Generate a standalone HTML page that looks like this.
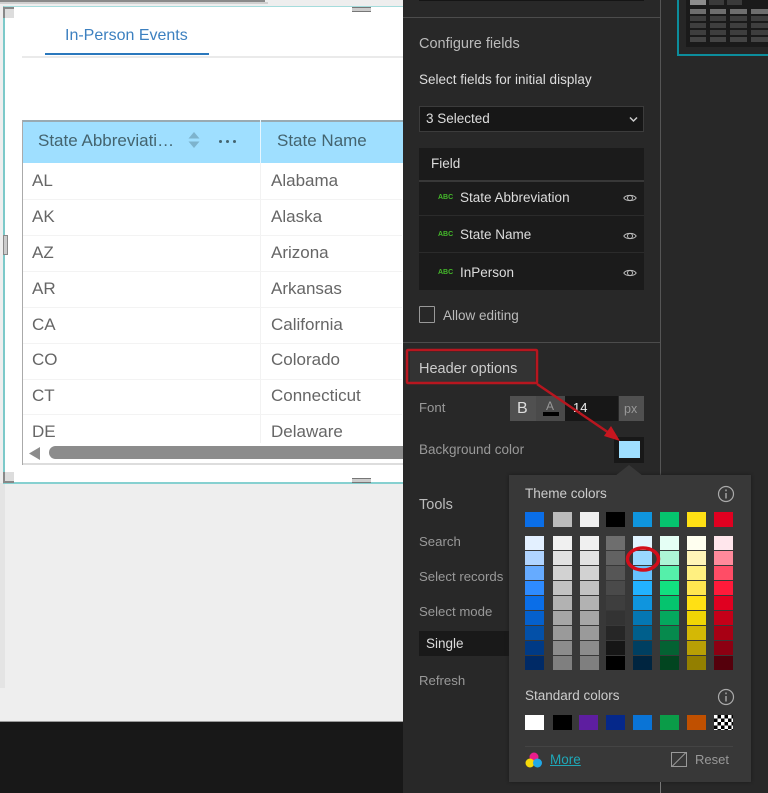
<!DOCTYPE html>
<html><head><meta charset="utf-8"><style>
*{box-sizing:border-box}
html,body{margin:0;padding:0}
body{width:768px;height:793px;position:relative;overflow:hidden;background:#eee;font-family:"Liberation Sans",sans-serif;filter:blur(.35px)}
.a,.t{position:absolute}
.t{white-space:nowrap;line-height:18px}
.c{font-size:17px;color:#666}
.rl{position:absolute;left:23px;width:379px;height:1px;background:#f3f3f3}
.p{font-size:13.200px;color:#999}
.h{font-size:14.500px;color:#bbb}
.w{color:#ddd;font-size:13.500px}
.abc{font-size:7px;font-weight:bold;color:#44b82a}
.col{position:absolute;top:536px;width:19px;display:flex;flex-direction:column;gap:1px}
.col i{display:block;height:14px}
.s{position:absolute;width:19px;height:15px}
.h1{position:absolute;width:19px;height:15px;top:715px}
.g{position:absolute;width:16px;height:5px;top:9px;background:#6e6e6e;box-shadow:0 7px #3e3e3e,0 14px #3e3e3e,0 21px #3e3e3e,0 28px #444}
</style></head><body>
<div class="a" style="left:0;top:0;width:265px;height:2px;background:#8a8a8a"></div>
<div class="a" style="left:0;top:2px;width:268px;height:2px;background:#d0d0d0"></div>
<div class="a" style="left:0;top:483px;width:5px;height:205px;background:#e4e4e4"></div>
<div class="a" style="left:0;top:721px;width:403px;height:1px;background:#999"></div>
<div class="a" style="left:0;top:722px;width:403px;height:71px;background:#181818"></div>

<div class="a" style="left:3px;top:6px;width:400px;height:478px;background:#fff;border-left:2px solid #7cc9c9;border-top:1px solid #a5dcdc;border-bottom:2px solid #86d0d0"></div>
<div class="a" style="left:3px;top:7px;width:11px;height:11px;background:#ddd;border-left:2px solid #888;border-top:2px solid #888"></div>
<div class="a" style="left:352px;top:7px;width:19px;height:5px;background:#ccc;border-bottom:1px solid #777;border-top:1px solid #777"></div>
<div class="a" style="left:3px;top:235px;width:5px;height:20px;background:#ccc;border:1px solid #888"></div>
<div class="a" style="left:3px;top:472px;width:11px;height:11px;background:#ddd;border-left:2px solid #888;border-bottom:2px solid #888"></div>
<div class="a" style="left:352px;top:478px;width:19px;height:5px;background:#ccc;border-top:1px solid #777;border-bottom:1px solid #777"></div>

<div class="t" style="left:65px;top:27px;font-size:16px;color:#3c80c0">In-Person Events</div>
<div class="a" style="left:22px;top:56px;width:381px;height:2px;background:#eaeaea"></div>
<div class="a" style="left:45px;top:53px;width:164px;height:2px;background:#2a78bd"></div>

<div class="a" style="left:22px;top:120px;width:381px;height:2px;background:#99aab2"></div>
<div class="a" style="left:22px;top:120px;width:1px;height:345px;background:#aaa"></div>
<div class="a" style="left:23px;top:122px;width:380px;height:41px;background:#9fdfff"></div>
<div class="a" style="left:260px;top:120px;width:1px;height:43px;background:#e6f6ff"></div>
<div class="a" style="left:260px;top:163px;width:1px;height:280px;background:#f2f2f2"></div>
<div class="t" style="left:38px;top:132px;font-size:17px;color:#44646f">State Abbreviati…</div>
<svg class="a" style="left:187px;top:131px" width="14" height="18"><path d="M7 1L12.500 7.500H1.500Z M1.500 10.500H12.500L7 17Z" fill="#7db3cd"/></svg>
<div class="a" style="left:219px;top:140px;width:3px;height:3px;border-radius:50%;background:#44646f;box-shadow:7px 0 #44646f,14px 0 #44646f"></div>
<div class="t" style="left:277px;top:132px;font-size:17px;color:#44646f">State Name</div>

<div class="rl" style="top:199px"></div><div class="rl" style="top:235px"></div><div class="rl" style="top:271px"></div><div class="rl" style="top:307px"></div><div class="rl" style="top:343px"></div><div class="rl" style="top:379px"></div><div class="rl" style="top:414px"></div>
<div class="t c" style="left:32px;top:172px">AL</div><div class="t c" style="left:271px;top:172px">Alabama</div>
<div class="t c" style="left:32px;top:208px">AK</div><div class="t c" style="left:271px;top:208px">Alaska</div>
<div class="t c" style="left:32px;top:244px">AZ</div><div class="t c" style="left:271px;top:244px">Arizona</div>
<div class="t c" style="left:32px;top:280px">AR</div><div class="t c" style="left:271px;top:280px">Arkansas</div>
<div class="t c" style="left:32px;top:316px">CA</div><div class="t c" style="left:271px;top:316px">California</div>
<div class="t c" style="left:32px;top:351px">CO</div><div class="t c" style="left:271px;top:351px">Colorado</div>
<div class="t c" style="left:32px;top:387px">CT</div><div class="t c" style="left:271px;top:387px">Connecticut</div>
<div class="t c" style="left:32px;top:423px">DE</div><div class="t c" style="left:271px;top:423px">Delaware</div>
<div class="a" style="left:23px;top:443px;width:380px;height:22px;background:#fff;border-bottom:2px solid #ddd"></div>
<svg class="a" style="left:28px;top:445px" width="13" height="17"><path d="M1 8.500L12 2V15Z" fill="#8c8c8c"/></svg>
<div class="a" style="left:49px;top:446px;width:354px;height:13px;background:#8c8c8c;border-radius:7px 0 0 7px"></div>

<div class="a" style="left:403px;top:0;width:365px;height:793px;background:#282828"></div>
<div class="a" style="left:660px;top:0;width:1px;height:793px;background:#555"></div>
<div class="a" style="left:403px;top:17px;width:257px;height:1px;background:#4c4c4c"></div>
<div class="a" style="left:419px;top:0;width:225px;height:1px;background:#151515"></div>

<div class="a" style="left:677px;top:0;width:91px;height:56px;border:2px solid #0c8d9c;border-top:0;border-right:0;background:#262626"></div>
<div class="a" style="left:686px;top:0;width:82px;height:47px;background:#1a1a1a"></div>
<div class="a" style="left:690px;top:0;width:16px;height:5px;background:#8c8c8c"></div>
<div class="a" style="left:709px;top:0;width:15px;height:5px;background:#3a3a3a"></div>
<div class="a" style="left:727px;top:0;width:15px;height:5px;background:#3a3a3a"></div>
<div class="g" style="left:690px"></div>
<div class="g" style="left:710px"></div>
<div class="g" style="left:730px;width:17px"></div>
<div class="g" style="left:751px;width:17px"></div>

<div class="t h" style="left:419px;top:35px">Configure fields</div>
<div class="t w" style="left:419px;top:71px">Select fields for initial display</div>
<div class="a" style="left:419px;top:106px;width:225px;height:26px;background:#171717;border:1px solid #3c3c3c"></div>
<div class="t w" style="left:426px;top:110px">3 Selected</div>
<svg class="a" style="left:629px;top:116px" width="9" height="7"><path d="M1 1.500L4.500 5L8 1.500" fill="none" stroke="#ccc" stroke-width="1.500"/></svg>

<div class="a" style="left:419px;top:148px;width:225px;height:142px;background:#1b1b1b"></div>
<div class="a" style="left:419px;top:180px;width:225px;height:2px;background:#383838"></div>
<div class="a" style="left:419px;top:215px;width:225px;height:1px;background:#2b2b2b"></div>
<div class="a" style="left:419px;top:252px;width:225px;height:1px;background:#2b2b2b"></div>
<div class="t w" style="left:431px;top:155px">Field</div>
<div class="t abc" style="left:438px;top:189px">ABC</div>
<div class="t w" style="left:460px;top:189px">State Abbreviation</div>
<div class="t abc" style="left:438px;top:226px">ABC</div>
<div class="t w" style="left:460px;top:226px">State Name</div>
<div class="t abc" style="left:438px;top:264px">ABC</div>
<div class="t w" style="left:460px;top:264px">InPerson</div>
<svg class="a" style="left:623px;top:192px" width="14" height="12"><path d="M.8 6C3 2.500 11 2.500 13.200 6C11 9.500 3 9.500 .8 6Z" fill="none" stroke="#bbb"/><circle cx="7" cy="6" r="2.500" fill="none" stroke="#bbb"/></svg>
<svg class="a" style="left:623px;top:230px" width="14" height="12"><path d="M.8 6C3 2.500 11 2.500 13.200 6C11 9.500 3 9.500 .8 6Z" fill="none" stroke="#bbb"/><circle cx="7" cy="6" r="2.500" fill="none" stroke="#bbb"/></svg>
<svg class="a" style="left:623px;top:267px" width="14" height="12"><path d="M.8 6C3 2.500 11 2.500 13.200 6C11 9.500 3 9.500 .8 6Z" fill="none" stroke="#bbb"/><circle cx="7" cy="6" r="2.500" fill="none" stroke="#bbb"/></svg>

<div class="a" style="left:419px;top:306px;width:16px;height:17px;border:1.500px solid #999;border-radius:1px"></div>
<div class="t" style="left:443px;top:307px;font-size:13.500px;color:#bbb">Allow editing</div>
<div class="a" style="left:403px;top:342px;width:257px;height:1px;background:#4c4c4c"></div>

<div class="a" style="left:410px;top:352px;width:125px;height:30px;background:#333"></div>
<div class="t" style="left:419px;top:360px;font-size:14.500px;color:#ccc">Header options</div>
<div class="t p" style="left:419px;top:399px">Font</div>
<div class="a" style="left:510px;top:396px;width:26px;height:25px;background:#505050"></div>
<div class="a" style="left:536px;top:396px;width:29px;height:25px;background:#4a4a4a"></div>
<div class="a" style="left:565px;top:396px;width:53px;height:25px;background:#171717"></div>
<div class="a" style="left:619px;top:396px;width:25px;height:25px;background:#505050"></div>
<div class="t" style="left:517px;top:400px;font-size:16px;color:#ddd">B</div>
<div class="t" style="left:546px;top:397px;font-size:12px;color:#999">A</div>
<div class="a" style="left:543px;top:412px;width:16px;height:4px;background:#000"></div>
<div class="t" style="left:573px;top:399px;font-size:13px;color:#eee">14</div>
<div class="t" style="left:624px;top:400px;font-size:12.500px;color:#999">px</div>
<div class="t p" style="left:419px;top:441px;font-size:13.500px">Background color</div>
<div class="a" style="left:614px;top:437px;width:30px;height:26px;background:#181818"></div>
<div class="a" style="left:619px;top:441px;width:21px;height:17px;background:#9fdfff"></div>

<div class="t h" style="left:419px;top:496px">Tools</div>
<div class="t p" style="left:419px;top:533px">Search</div>
<div class="t p" style="left:419px;top:568px">Select records</div>
<div class="t p" style="left:419px;top:603px">Select mode</div>
<div class="a" style="left:419px;top:631px;width:90px;height:25px;background:#191919"></div>
<div class="t w" style="left:426px;top:635px">Single</div>
<div class="t p" style="left:419px;top:672px">Refresh</div>

<div class="a" style="left:509px;top:475px;width:242px;height:307px;background:#383838;box-shadow:0 0 3px #1a1a1a"></div>
<svg class="a" style="left:614px;top:464px" width="30" height="12"><path d="M1 12L15 1L29 12Z" fill="#383838"/></svg>
<div class="t" style="left:525px;top:485px;font-size:13.500px;color:#ccc">Theme colors</div>
<svg class="a" style="left:717px;top:485px" width="18" height="18"><circle cx="9" cy="9" r="7.500" fill="none" stroke="#aaa" stroke-width="1.200"/><path d="M9 8V13.500M9 4.500V6.300" stroke="#aaa" stroke-width="1.400"/></svg>

<div class="s" style="left:525px;top:512px;background:#0a6ee8"></div>
<div class="s" style="left:553px;top:512px;background:#bbb"></div>
<div class="s" style="left:580px;top:512px;background:#f0f0f0"></div>
<div class="s" style="left:606px;top:512px;background:#000"></div>
<div class="s" style="left:633px;top:512px;background:#0f95de"></div>
<div class="s" style="left:660px;top:512px;background:#05c46e"></div>
<div class="s" style="left:687px;top:512px;background:#ffe014"></div>
<div class="s" style="left:714px;top:512px;background:#e00020"></div>

<div class="col" style="left:525px"><i style="background:#e3f0ff"></i><i style="background:#b0d4ff"></i><i style="background:#66abff"></i><i style="background:#2e8bff"></i><i style="background:#0a6ee8"></i><i style="background:#0560cc"></i><i style="background:#0350a8"></i><i style="background:#003a85"></i><i style="background:#002a66"></i></div>
<div class="col" style="left:553px"><i style="background:#f0f0f0"></i><i style="background:#e2e2e2"></i><i style="background:#d2d2d2"></i><i style="background:#c2c2c2"></i><i style="background:#b2b2b2"></i><i style="background:#a6a6a6"></i><i style="background:#9a9a9a"></i><i style="background:#8c8c8c"></i><i style="background:#7f7f7f"></i></div>
<div class="col" style="left:580px"><i style="background:#f0f0f0"></i><i style="background:#e2e2e2"></i><i style="background:#d2d2d2"></i><i style="background:#c2c2c2"></i><i style="background:#b2b2b2"></i><i style="background:#a6a6a6"></i><i style="background:#9a9a9a"></i><i style="background:#8c8c8c"></i><i style="background:#7f7f7f"></i></div>
<div class="col" style="left:606px"><i style="background:#6e6e6e"></i><i style="background:#626262"></i><i style="background:#565656"></i><i style="background:#4a4a4a"></i><i style="background:#3e3e3e"></i><i style="background:#333"></i><i style="background:#262626"></i><i style="background:#161616"></i><i style="background:#000"></i></div>
<div class="col" style="left:633px"><i style="background:#e2f4ff"></i><i style="background:#99d8ff"></i><i style="background:#66c2ff"></i><i style="background:#22b2ff"></i><i style="background:#0f95de"></i><i style="background:#0577b3"></i><i style="background:#005f8c"></i><i style="background:#003f61"></i><i style="background:#002540"></i></div>
<div class="col" style="left:660px"><i style="background:#e5fff5"></i><i style="background:#adf5d6"></i><i style="background:#55f0aa"></i><i style="background:#12e080"></i><i style="background:#05c46e"></i><i style="background:#05a85e"></i><i style="background:#068a4d"></i><i style="background:#046233"></i><i style="background:#024520"></i></div>
<div class="col" style="left:687px"><i style="background:#fffff0"></i><i style="background:#fff5b8"></i><i style="background:#fff080"></i><i style="background:#ffe650"></i><i style="background:#ffe014"></i><i style="background:#f0d505"></i><i style="background:#d4b805"></i><i style="background:#b89f05"></i><i style="background:#937f00"></i></div>
<div class="col" style="left:714px"><i style="background:#ffe6ec"></i><i style="background:#ff8a9b"></i><i style="background:#ff4d66"></i><i style="background:#ff1a3a"></i><i style="background:#e00020"></i><i style="background:#c40018"></i><i style="background:#a80014"></i><i style="background:#8c0012"></i><i style="background:#55000c"></i></div>

<div class="t" style="left:525px;top:687px;font-size:13.500px;color:#ccc">Standard colors</div>
<svg class="a" style="left:717px;top:688px" width="18" height="18"><circle cx="9" cy="9" r="7.500" fill="none" stroke="#aaa" stroke-width="1.200"/><path d="M9 8V13.500M9 4.500V6.300" stroke="#aaa" stroke-width="1.400"/></svg>
<div class="h1" style="left:525px;background:#fff"></div>
<div class="h1" style="left:553px;background:#000"></div>
<div class="h1" style="left:579px;background:#5e1ea0"></div>
<div class="h1" style="left:606px;background:#05288a"></div>
<div class="h1" style="left:633px;background:#0a74d6"></div>
<div class="h1" style="left:660px;background:#0a9c48"></div>
<div class="h1" style="left:687px;background:#c05000"></div>
<div class="h1" style="left:714px;background:repeating-conic-gradient(#000 0 25%,#fff 0 50%) 0 0/7px 7px"></div>
<div class="a" style="left:525px;top:746px;width:208px;height:1px;background:#444"></div>
<svg class="a" style="left:525px;top:751px" width="18" height="18"><circle cx="9" cy="6" r="4.500" fill="#ea1d8c"/><circle cx="5" cy="12" r="4.500" fill="#f5d90a"/><circle cx="12.500" cy="12" r="4.500" fill="#21a8e6"/></svg>
<div class="t" style="left:550px;top:751px;font-size:13.500px;color:#1fa8b8;text-decoration:underline">More</div>
<svg class="a" style="left:671px;top:752px" width="16" height="15"><rect x=".5" y=".5" width="15" height="14" fill="none" stroke="#999"/><path d="M1 14.500L15 .5" stroke="#999"/></svg>
<div class="t" style="left:695px;top:751px;font-size:13px;color:#999">Reset</div>
<div class="a" style="left:660px;top:782px;width:1px;height:11px;background:#777"></div>

<svg class="a" style="left:0;top:0" width="768" height="793">
<rect x="407" y="350" width="130" height="33" fill="none" stroke="#b8161f" stroke-width="2.500" rx="1"/>
<path d="M537 384L612 435" stroke="#b8161f" stroke-width="2.500"/>
<path d="M620 441L604 436L611 426Z" fill="#c8161f"/>
<ellipse cx="643" cy="559" rx="15.500" ry="11" fill="none" stroke="#d40d1a" stroke-width="3.500"/>
</svg>
</body></html>
